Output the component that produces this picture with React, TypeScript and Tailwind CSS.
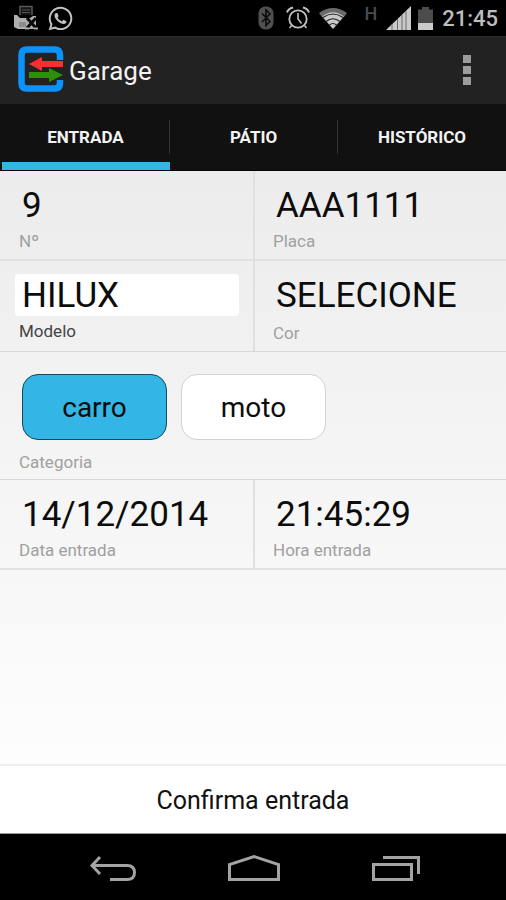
import { useState } from "react";
import type { ReactNode } from "react";
import { FaWhatsapp } from "react-icons/fa";

function PrinterErrorIcon() {
  return (
    <svg width="24" height="26" viewBox="0 0 24 26" aria-hidden="true">
      <path d="M6 10V1.500h12V10" fill="#151515" stroke="#5a5a5a" strokeWidth="1.5" />
      <path d="M8 5h8M8 7.500h8" stroke="#555" strokeWidth="1.200" />
      <path d="M0 10h3l3 3h10l3-2h3v13H4l-4-2z" fill="#b0b0b0" />
      <path d="M5 17h7v5H5z" fill="#8c8c8c" />
      <path d="M13 13l9 10M22 13l-9 10" stroke="#0a0a0a" strokeWidth="3" />
      <path d="M20 23.500h4M11 23.500h4" stroke="#a8a8a8" strokeWidth="2" />
    </svg>
  );
}

function BluetoothIcon() {
  return (
    <svg width="16" height="24" viewBox="0 0 16 24" aria-hidden="true">
      <rect x="0.500" y="0.500" width="15" height="23" rx="7" fill="#505050" />
      <path d="M4 7.500l8 8-4 4V4l4 4-8 8" fill="none" stroke="#0c0c0c" strokeWidth="1.600" />
    </svg>
  );
}

function AlarmIcon() {
  return (
    <svg width="24" height="24" viewBox="0 0 24 24" fill="none" stroke="#c2c2c2" aria-hidden="true">
      <circle cx="12" cy="13" r="8.700" strokeWidth="1.800" />
      <path d="M12 7v6l3.500 4.500" strokeWidth="1.600" />
      <path d="M1 6.500Q2.500 2.500 7 1.500M23 6.500Q21.500 2.500 17 1.500" strokeWidth="2" />
      <path d="M5.500 19.500l-2 2.500M18.500 19.500l2 2.500" strokeWidth="1.500" />
    </svg>
  );
}

function WifiIcon() {
  return (
    <svg width="28" height="21" viewBox="0 0 28 21" aria-hidden="true">
      <path d="M0 5Q14-5 28 5L25 9Q14 1 3 9z" fill="#6a6a6a" />
      <path d="M3 8.500Q14 0 25 8.500L14 21z" fill="#c8c8c8" />
      <path d="M4 9.500Q14 2.500 24 9.500M7 13.500Q14 8 21 13.500M10.500 17Q14 14 17.500 17" fill="none" stroke="#222" strokeWidth="1.200" />
    </svg>
  );
}

function SignalIcon() {
  return (
    <svg width="25" height="24" viewBox="0 0 25 24" aria-hidden="true">
      <path d="M0 24L25 0V24z" fill="#cacaca" />
      <path d="M6 18v6M11.500 13v11M16 9v15M20 5v19" stroke="#6a6a6a" strokeWidth="1" />
    </svg>
  );
}

function BatteryIcon() {
  return (
    <svg width="15" height="23" viewBox="0 0 15 23" aria-hidden="true">
      <path d="M0 2.500h4V0h7v2.500h4V16H0z" fill="#4c4c4c" />
      <path d="M0 16h15v7H0z" fill="#cacaca" />
    </svg>
  );
}

function GarageLogo() {
  return (
    <svg className="mb-[3px]" width="46" height="46" viewBox="0 0 46 46" aria-hidden="true">
      <path d="M42 14V9Q42 3.500 36.500 3.500H9Q3.500 3.500 3.500 9V37Q3.500 42.500 9 42.500H36.500Q42 42.500 42 37V34" fill="none" stroke="#0c93fb" strokeWidth="6.500" />
      <path d="M11 18L24 11V15H45V21H24V25z" fill="#fb2f32" />
      <path d="M45 29L31 22V26H11V32H31V36z" fill="#2f8f0c" />
    </svg>
  );
}

const inputClass =
  "block h-[42px] w-full min-w-0 appearance-none rounded-[4px] border-0 px-[7px] pt-[2px] text-[35px] text-[#0c0c0c] outline-none";

function Cell({ id, label, active = false, side, children }: {
  id: string;
  label: string;
  active?: boolean;
  side: "left" | "right";
  children: ReactNode;
}) {
  return (
    <div
      className={`pt-[13px] pr-[14px] pb-2 ${
        side === "right" ? "border-l-2 border-[#e0e0e0] pl-[14px]" : "pl-[15px]"
      }`}
    >
      {children}
      <label
        htmlFor={id}
        className={`block px-1 pt-[5px] text-[17px] leading-5 ${active ? "text-[#444]" : "text-[#a0a0a0]"}`}
      >
        {label}
      </label>
    </div>
  );
}

const tabs = ["ENTRADA", "PÁTIO", "HISTÓRICO"];
const categories = ["carro", "moto"];

export default function App() {
  const [tab, setTab] = useState("ENTRADA");
  const [category, setCategory] = useState("carro");

  return (
    <div className="flex min-h-screen flex-col bg-black font-[Roboto,'Noto_Sans',sans-serif]">
      <div className="flex h-9 items-center justify-between pr-2 pl-[14px]">
        <div className="flex items-center gap-[9px]">
          <PrinterErrorIcon />
          <FaWhatsapp size={27} color="#c2c2c2" aria-hidden="true" />
        </div>
        <div className="flex items-center gap-[9px]">
          <div className="flex items-center gap-3">
            <BluetoothIcon />
            <AlarmIcon />
          </div>
          <WifiIcon />
          <span className="mb-2 ml-2 text-[18px] leading-5 font-medium text-[#4c4c4c]">H</span>
          <div className="flex items-center gap-[7px]">
            <SignalIcon />
            <BatteryIcon />
          </div>
          <time className="pt-[2px] text-[22px] leading-8 font-medium text-[#bdbdbd]">21:45</time>
        </div>
      </div>

      <header className="flex h-[68px] items-center justify-between border-t border-[#303030] bg-[#222] pr-[25px] pl-[18px]">
        <div className="flex items-center gap-[5px]">
          <GarageLogo />
          <h1 className="text-[26px] leading-8 text-[#f3f3f3]">Garage</h1>
        </div>
        <button type="button" aria-label="Mais opções" className="flex w-7 flex-col items-center gap-[3px] pt-2 pb-[10px]">
          <span className="size-2 bg-[#9c9c9c]" />
          <span className="size-2 bg-[#9c9c9c]" />
          <span className="size-2 bg-[#9c9c9c]" />
        </button>
      </header>

      <nav className="grid h-[67px] grid-cols-3 border-b border-[#050505] bg-[#111] pl-[2px]">
        {tabs.map((name, i) => (
          <button
            key={name}
            type="button"
            onClick={() => setTab(name)}
            className={`flex items-center border-t-8 border-b-8 border-t-transparent ${
              tab === name ? "border-b-[#33b5e5]" : "border-b-transparent"
            }`}
          >
            <span
              className={`flex h-[34px] flex-1 items-center justify-center pt-[2px] text-[17px] font-bold text-[#f3f3f3] ${
                i < 2 ? "border-r border-[#333]" : ""
              }`}
            >
              {name}
            </span>
          </button>
        ))}
      </nav>

      <main className="flex flex-1 flex-col bg-linear-to-b from-[#ececec] to-white">
        <form className="flex flex-1 flex-col" onSubmit={(e) => e.preventDefault()}>
          <div className="grid grid-cols-2 border-b-2 border-[#e0e0e0]">
            <Cell id="numero" label="Nº" side="left">
              <input id="numero" defaultValue="9" className={inputClass} />
            </Cell>
            <Cell id="placa" label="Placa" side="right">
              <input id="placa" defaultValue="AAA1111" className={inputClass} />
            </Cell>
          </div>
          <div className="grid grid-cols-2 border-b border-[#d8d8d8]">
            <Cell id="modelo" label="Modelo" active side="left">
              <input id="modelo" defaultValue="HILUX" className={`${inputClass} bg-white`} />
            </Cell>
            <Cell id="cor" label="Cor" side="right">
              <select id="cor" className={`${inputClass} mb-[2px] leading-10`}>
                <option>SELECIONE</option>
              </select>
            </Cell>
          </div>
          <fieldset
            aria-labelledby="categoria"
            className="flex flex-col border-b border-[#d8d8d8] px-[19px] pt-[22px] pb-[7px]"
          >
            <div className="flex gap-[14px] px-[3px]">
              {categories.map((name) => (
                <label
                  key={name}
                  className={`relative flex h-[66px] w-[145px] items-center justify-center rounded-[16px] border pt-[2px] text-[28px] text-[#0c0c0c] ${
                    category === name ? "border-[#164a5e] bg-[#33b5e5]" : "border-[#d2d2d2] bg-white"
                  }`}
                >
                  <input
                    type="radio"
                    name="categoria"
                    checked={category === name}
                    onChange={() => setCategory(name)}
                    className="sr-only"
                  />
                  {name}
                </label>
              ))}
            </div>
            <span id="categoria" className="pt-3 text-[17px] leading-5 text-[#a0a0a0]">Categoria</span>
          </fieldset>
          <div className="grid grid-cols-2 border-b-2 border-[#e2e2e2]">
            <Cell id="data" label="Data entrada" side="left">
              <input id="data" defaultValue="14/12/2014" className={inputClass} />
            </Cell>
            <Cell id="hora" label="Hora entrada" side="right">
              <input id="hora" defaultValue="21:45:29" className={inputClass} />
            </Cell>
          </div>
          <button
            type="submit"
            className="mt-auto h-[70px] border-t-2 border-b border-t-[#eee] border-b-[#999] bg-white pt-[2px] text-[25px] text-[#111]"
          >
            Confirma entrada
          </button>
        </form>
      </main>

      <footer className="flex h-[66px] items-center justify-between pt-[2px] pr-[85px] pl-[88px]">
        <button type="button" aria-label="Voltar">
          <svg width="48" height="28" viewBox="0 0 48 28" fill="none" stroke="#a3a3a3" strokeWidth="3">
            <path d="M12 3L4 11.500L12 20M4 11.500H39Q46.500 11.500 46.500 18.500T39 25.500H22" />
          </svg>
        </button>
        <button type="button" aria-label="Início">
          <svg width="54" height="28" viewBox="0 0 54 28" fill="none" stroke="#a3a3a3" strokeWidth="3">
            <path d="M2.500 25.500V10.500L27 2.500L51.500 10.500V25.500z" />
          </svg>
        </button>
        <button type="button" aria-label="Recentes">
          <svg width="50" height="28" viewBox="0 0 50 28" fill="none" stroke="#a3a3a3" strokeWidth="3">
            <path d="M2.500 10.500H40.500V25.500H2.500zM12 3.500H47.500V20" />
          </svg>
        </button>
      </footer>
    </div>
  );
}
